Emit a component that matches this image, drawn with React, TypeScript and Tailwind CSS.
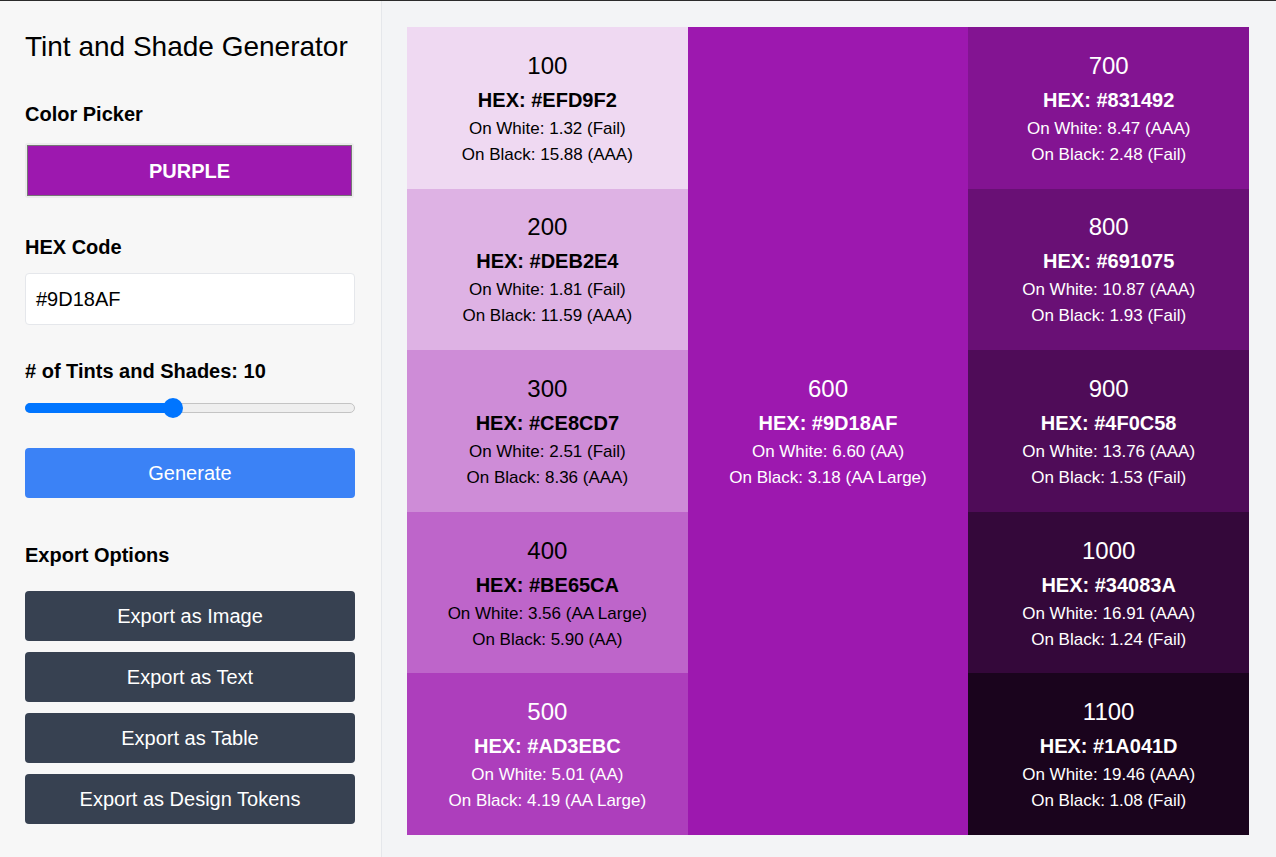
const shades = [
  { name: "100", hex: "#EFD9F2", white: "1.32 (Fail)", black: "15.88 (AAA)", dark: true },
  { name: "200", hex: "#DEB2E4", white: "1.81 (Fail)", black: "11.59 (AAA)", dark: true },
  { name: "300", hex: "#CE8CD7", white: "2.51 (Fail)", black: "8.36 (AAA)", dark: true },
  { name: "400", hex: "#BE65CA", white: "3.56 (AA Large)", black: "5.90 (AA)", dark: true },
  { name: "500", hex: "#AD3EBC", white: "5.01 (AA)", black: "4.19 (AA Large)", dark: false },
  { name: "600", hex: "#9D18AF", white: "6.60 (AA)", black: "3.18 (AA Large)", dark: false, base: true },
  { name: "700", hex: "#831492", white: "8.47 (AAA)", black: "2.48 (Fail)", dark: false },
  { name: "800", hex: "#691075", white: "10.87 (AAA)", black: "1.93 (Fail)", dark: false },
  { name: "900", hex: "#4F0C58", white: "13.76 (AAA)", black: "1.53 (Fail)", dark: false },
  { name: "1000", hex: "#34083A", white: "16.91 (AAA)", black: "1.24 (Fail)", dark: false },
  { name: "1100", hex: "#1A041D", white: "19.46 (AAA)", black: "1.08 (Fail)", dark: false },
];

function ShadeCell(props: { shade: (typeof shades)[number] }) {
  const s = props.shade;
  return (
    <div
      className={
        "flex flex-col items-center justify-center text-center " +
        (s.dark ? "text-black " : "text-white ") +
        (s.base ? "row-span-5" : "")
      }
      style={{ backgroundColor: s.hex }}
    >
      <div className="text-[24px] leading-[36px]">{s.name}</div>
      <div className="text-[20px] leading-[32px] font-bold">HEX: {s.hex}</div>
      <div className="text-[17px] leading-[26px]">On White: {s.white}</div>
      <div className="text-[17px] leading-[26px]">On Black: {s.black}</div>
    </div>
  );
}

export default function App() {
  const exportsList = ["Export as Image", "Export as Text", "Export as Table", "Export as Design Tokens"];
  return (
    <div
      className="flex min-h-[857px] border-t border-[#2b2b2b] bg-[#f3f4f6] text-black"
      style={{ fontFamily: '"Liberation Sans", Arial, sans-serif' }}
    >
      <aside className="w-[382px] shrink-0 border-r border-[#e5e7eb] bg-[#f7f7f7] pl-[25px] pr-[26px] pt-[30px]">
        <h1 className="text-[28px] leading-[32px]">Tint and Shade Generator</h1>

        <h2 className="mt-[37px] text-[20px] leading-[28px] font-bold">Color Picker</h2>
        <div className="mt-[15px] h-[55px] w-[329px] rounded-[3px] bg-[#ececec] p-[2px]">
          <div className="flex h-full items-center justify-center border border-[#767676] bg-[#9D18AF] text-[20px] font-bold text-white">
            PURPLE
          </div>
        </div>

        <h2 className="mt-[35px] text-[20px] leading-[28px] font-bold">HEX Code</h2>
        <div className="mt-[12px] flex h-[52px] items-center rounded-[4px] border border-[#e5e7eb] bg-white px-[10px] text-[20px]">
          #9D18AF
        </div>

        <h2 className="mt-[32px] text-[20px] leading-[28px] font-bold"># of Tints and Shades: 10</h2>
        <div className="relative mt-[13px] flex h-[20px] items-center">
          <div className="h-[10px] w-full rounded-full border border-[#c4c4c4] bg-[#efefef]" />
          <div className="absolute left-0 top-[5px] h-[10px] w-[150px] rounded-full bg-[#0075ff]" />
          <div className="absolute left-[138px] top-0 h-[20px] w-[20px] rounded-full bg-[#0075ff]" />
        </div>

        <button className="mt-[30px] h-[50px] w-full rounded-[4px] bg-[#3b82f6] text-[20px] text-white">
          Generate
        </button>

        <h2 className="mt-[43px] text-[20px] leading-[28px] font-bold">Export Options</h2>
        <div className="mt-[22px] flex flex-col gap-[11px]">
          {exportsList.map((label) => (
            <button key={label} className="h-[50px] w-full rounded-[4px] bg-[#374151] text-[20px] text-white">
              {label}
            </button>
          ))}
        </div>
      </aside>

      <main className="flex-1 pl-[25px] pr-[27px] pt-[26px]">
        <div className="grid h-[808px] grid-flow-col grid-cols-3 grid-rows-5">
          {shades.map((s) => (
            <ShadeCell key={s.name} shade={s} />
          ))}
        </div>
      </main>
    </div>
  );
}
